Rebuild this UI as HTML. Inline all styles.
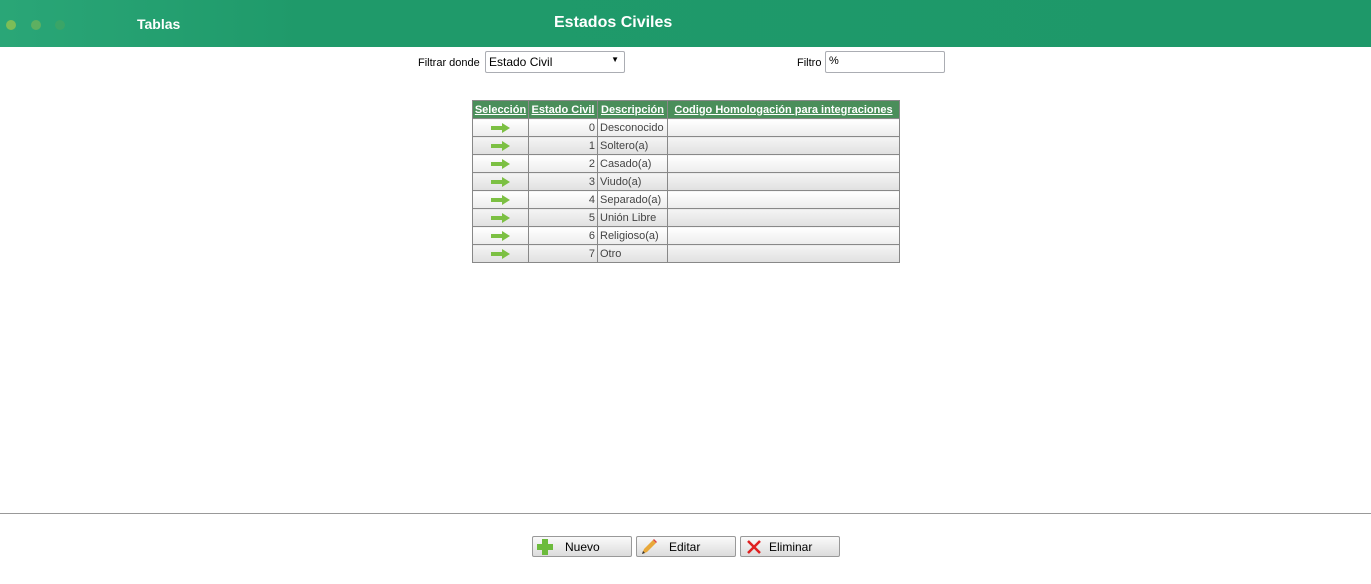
<!DOCTYPE html>
<html><head><style>
body{margin:0;width:1371px;height:584px;background:#fff;font-family:"Liberation Sans",sans-serif;position:relative;overflow:hidden}
.hdr{position:absolute;left:0;top:0;width:1371px;height:47px;background:linear-gradient(90deg,#2aa677 0,#1f9a6a 300px,#1e9869 100%)}
.dot{position:absolute;top:20px;width:10px;height:10px;border-radius:50%}
.t{position:absolute;color:#fff;font-weight:bold}
.lbl{position:absolute;font-size:11px;color:#000}
.box{position:absolute;border:1px solid #abadb3;border-radius:2px;font-size:11px;box-sizing:border-box;padding:3px 3px;height:22px;background:#fff}
table{position:absolute;left:472px;top:100px;border-collapse:collapse;font-size:11px;table-layout:fixed;width:427px}
th{background:#4a8e5a;color:#fff;text-decoration:underline;font-weight:bold;height:17px;padding:0 1px;border:1px solid #888;white-space:nowrap;font-size:11px;overflow:hidden}
td{height:17px;border:1px solid #888;padding:0 2px;color:#444;white-space:nowrap;overflow:hidden}
td svg{vertical-align:middle}
tr.a td{background:linear-gradient(#fff,#ececec)}
tr.b td{background:linear-gradient(#f4f4f4,#e0e0e0)}
.btn{position:absolute;top:536px;width:100px;height:21px;border:1px solid #999;border-radius:2px;background:linear-gradient(#fafafa,#dcdcdc);font-size:12px;box-sizing:border-box}
.btn span{position:absolute;left:32px;top:3px}
</style></head><body>
<div class="hdr">
<div class="dot" style="left:6px;background:#7cbd57"></div>
<div class="dot" style="left:31px;background:#5eb061"></div>
<div class="dot" style="left:55px;background:#3aa567"></div>
<div class="t" style="left:137px;top:16px;font-size:14px">Tablas</div>
<div class="t" style="left:554px;top:14px;font-size:16px">Estados Civiles</div>
</div>
<div class="lbl" style="left:418px;top:57px">Filtrar donde</div>
<div class="box" style="left:485px;top:51px;width:140px;font-size:12px">Estado Civil<span style="position:absolute;right:5px;top:3px;font-size:8px">▼</span></div>
<div class="lbl" style="left:797px;top:57px">Filtro</div>
<div class="box" style="left:825px;top:51px;width:120px">%</div>
<table>
<colgroup><col style="width:56px"><col style="width:69px"><col style="width:70px"><col style="width:232px"></colgroup>
<tr><th>Selección</th><th>Estado Civil</th><th>Descripción</th><th>Codigo Homologación para integraciones</th></tr>
<tr class="a"><td align="center"><svg width="20" height="10"><path d="M0 3h11V0l8 5-8 5V7H0z" fill="#7cc043"/></svg></td><td align="right">0</td><td>Desconocido</td><td></td></tr>
<tr class="b"><td align="center"><svg width="20" height="10"><path d="M0 3h11V0l8 5-8 5V7H0z" fill="#7cc043"/></svg></td><td align="right">1</td><td>Soltero(a)</td><td></td></tr>
<tr class="a"><td align="center"><svg width="20" height="10"><path d="M0 3h11V0l8 5-8 5V7H0z" fill="#7cc043"/></svg></td><td align="right">2</td><td>Casado(a)</td><td></td></tr>
<tr class="b"><td align="center"><svg width="20" height="10"><path d="M0 3h11V0l8 5-8 5V7H0z" fill="#7cc043"/></svg></td><td align="right">3</td><td>Viudo(a)</td><td></td></tr>
<tr class="a"><td align="center"><svg width="20" height="10"><path d="M0 3h11V0l8 5-8 5V7H0z" fill="#7cc043"/></svg></td><td align="right">4</td><td>Separado(a)</td><td></td></tr>
<tr class="b"><td align="center"><svg width="20" height="10"><path d="M0 3h11V0l8 5-8 5V7H0z" fill="#7cc043"/></svg></td><td align="right">5</td><td>Unión Libre</td><td></td></tr>
<tr class="a"><td align="center"><svg width="20" height="10"><path d="M0 3h11V0l8 5-8 5V7H0z" fill="#7cc043"/></svg></td><td align="right">6</td><td>Religioso(a)</td><td></td></tr>
<tr class="b"><td align="center"><svg width="20" height="10"><path d="M0 3h11V0l8 5-8 5V7H0z" fill="#7cc043"/></svg></td><td align="right">7</td><td>Otro</td><td></td></tr>
</table>
<div style="position:absolute;left:0;top:513px;width:1371px;height:1px;background:#999"></div>
<div class="btn" style="left:532px"><svg style="position:absolute;left:4px;top:2px" width="16" height="16"><path d="M5 0h6v5h5v6h-5v5H5v-5H0V5h5z" fill="#6cbb3c"/></svg><span>Nuevo</span></div>
<div class="btn" style="left:636px"><svg style="position:absolute;left:4px;top:2px" width="16" height="16"><path d="M1 15l2-5 9-9 3 3-9 9z" fill="#e8a83a"/><path d="M12 1l3 3 1-1-3-3z" fill="#d44"/><path d="M1 15l1-3 2 2z" fill="#333"/></svg><span>Editar</span></div>
<div class="btn" style="left:740px"><svg style="position:absolute;left:6px;top:3px" width="14" height="14"><path d="M1 1l12 12M13 1L1 13" stroke="#e02020" stroke-width="2.5"/></svg><span style="left:28px">Eliminar</span></div>
</body></html>
